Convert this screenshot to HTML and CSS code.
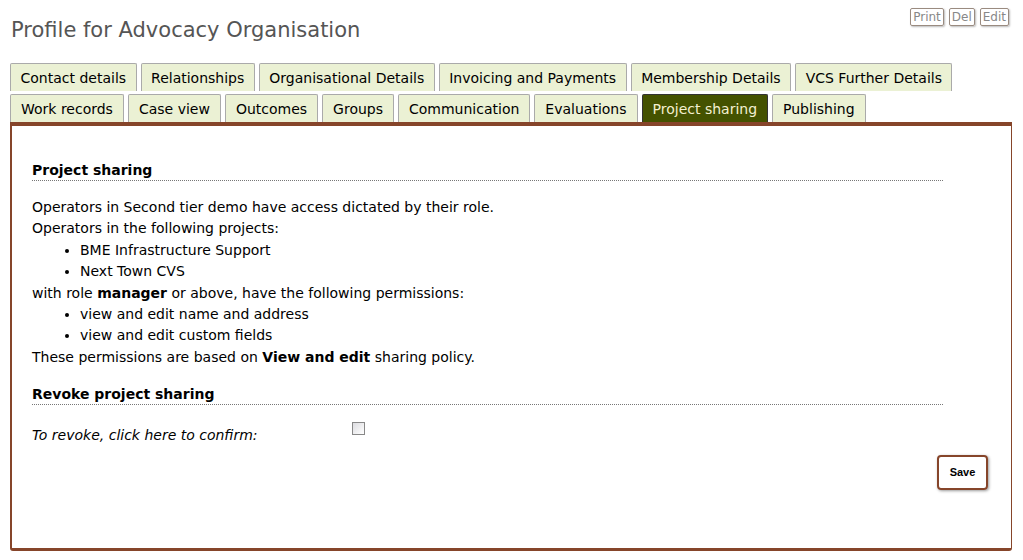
FILE: index.html
```html
<!DOCTYPE html>
<html>
<head>
<meta charset="utf-8">
<link rel="stylesheet" href="styles.css">
</head>
<body>
<div class="page">
  <div class="header">
    <h1 class="title">Profile for Advocacy Organisation</h1>
    <div class="actions">
      <span class="mini-btn">Print</span>
      <span class="mini-btn">Del</span>
      <span class="mini-btn">Edit</span>
    </div>
  </div>
  <div class="tabs">
    <div class="tab-row">
      <span class="tab">Contact details</span>
      <span class="tab">Relationships</span>
      <span class="tab">Organisational Details</span>
      <span class="tab">Invoicing and Payments</span>
      <span class="tab">Membership Details</span>
      <span class="tab">VCS Further Details</span>
    </div>
    <div class="tab-row">
      <span class="tab">Work records</span>
      <span class="tab">Case view</span>
      <span class="tab">Outcomes</span>
      <span class="tab">Groups</span>
      <span class="tab">Communication</span>
      <span class="tab">Evaluations</span>
      <span class="tab active">Project sharing</span>
      <span class="tab">Publishing</span>
    </div>
  </div>
  <div class="panel">
    <div class="content">
      <h2 class="section">Project sharing</h2>
      <p class="line">Operators in Second tier demo have access dictated by their role.</p>
      <p class="line">Operators in the following projects:</p>
      <ul class="list">
        <li>BME Infrastructure Support</li>
        <li>Next Town CVS</li>
      </ul>
      <p class="line">with role <b>manager</b> or above, have the following permissions:</p>
      <ul class="list">
        <li>view and edit name and address</li>
        <li>view and edit custom fields</li>
      </ul>
      <p class="line">These permissions are based on <b>View and edit</b> sharing policy.</p>
      <h2 class="section revoke">Revoke project sharing</h2>
      <div class="confirm">
        <span class="confirm-label">To revoke, click here to confirm:</span>
        <span class="checkbox"></span>
      </div>
    </div>
    <div class="save-row">
      <span class="save">Save</span>
    </div>
  </div>
</div>
</body>
</html>
```
FILE: styles.css
```css
html, body {
  margin: 0;
  padding: 0;
  background: #fff;
}
body {
  font-family: "DejaVu Sans", Verdana, sans-serif;
  font-size: 14px;
  color: #000;
}
.page {
  padding: 0 11px 0 10px;
}
.header {
  display: flex;
  justify-content: space-between;
  align-items: flex-start;
}
.title {
  margin: 16px 0 0 1px;
  font-size: 21px;
  font-weight: normal;
  color: #555;
  line-height: 28px;
}
.actions {
  display: flex;
  gap: 5px;
  margin-top: 8px;
  margin-right: 3px;
}
.mini-btn {
  display: block;
  font-size: 12px;
  line-height: 16px;
  padding: 0 2px;
  color: #888;
  border: 1px solid #9a8b80;
  border-radius: 2px;
  box-shadow: 1px 1px 2px #bbb;
}
.tabs {
  margin-top: 19px;
  display: flex;
  flex-direction: column;
  gap: 3px;
}
.tab-row {
  display: flex;
  gap: 4px;
}
.tab {
  display: block;
  padding: 0 10px;
  height: 27px;
  line-height: 28px;
  font-size: 14px;
  background: #ebf1d4;
  border: 1px solid #aaa;
  border-bottom: none;
  border-radius: 2px 2px 0 0;
  color: #000;
}
.tab-row:first-child .tab {
  padding: 0 9.5px;
}
.tab.active {
  background: #445200;
  color: #f4f0d0;
  border-color: #333;
}
.panel {
  border: 1px solid #86452a;
  border-top: 4px solid #86452a;
  border-bottom: 3px solid #86452a;
  border-left-width: 2px;
  border-radius: 0 0 3px 3px;
  height: 422px;
  display: flex;
  flex-direction: column;
}
.content {
  padding: 34px 68px 0 20px;
  line-height: 21.4px;
}
.section {
  margin: 0 0 16px;
  font-size: 14px;
  font-weight: bold;
  line-height: 20px;
  border-bottom: 1px dotted #777;
}
.line {
  margin: 0;
}
.list {
  margin: 0;
  padding-left: 48px;
}
.revoke {
  margin-top: 16px;
  margin-bottom: 0;
}
.confirm {
  display: flex;
  align-items: flex-start;
  padding-top: 20px;
}
.confirm-label {
  font-style: italic;
  width: 320px;
}
.checkbox {
  display: block;
  width: 11px;
  height: 11px;
  border: 1px solid #888;
  background: linear-gradient(135deg, #dcdce0, #fff);
  margin-top: -3px;
}
.save-row {
  display: flex;
  justify-content: flex-end;
  padding-right: 23px;
  margin-top: 8px;
}
.save {
  display: block;
  font-family: "Liberation Sans", Arial, sans-serif;
  font-weight: bold;
  font-size: 11px;
  width: 47px;
  height: 31px;
  line-height: 31px;
  text-align: center;
  border: 2px solid #86452a;
  border-radius: 4px;
  box-shadow: 1px 1px 3px #999;
}
```
